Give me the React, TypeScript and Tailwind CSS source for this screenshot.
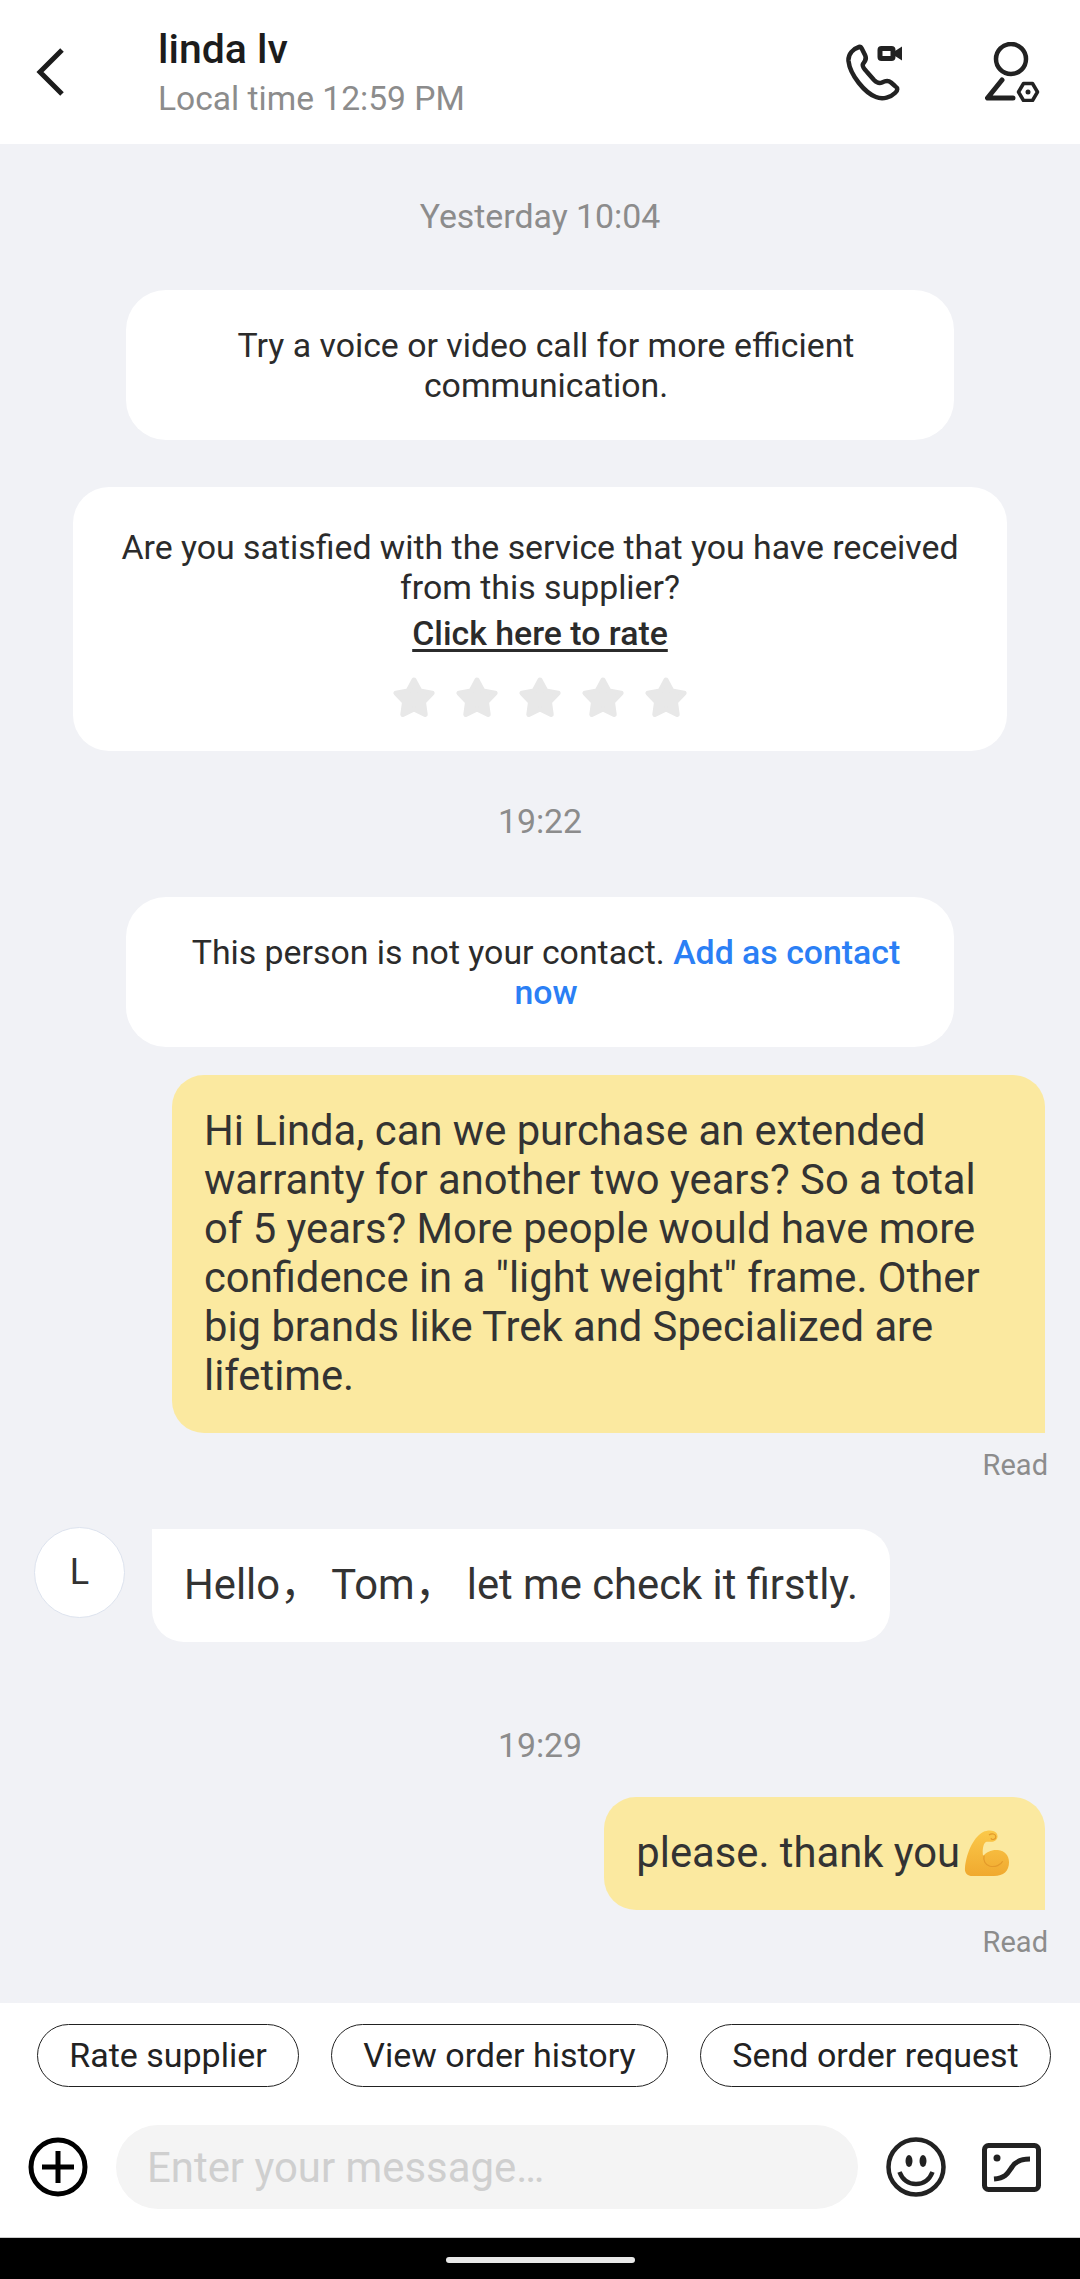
import React from "react";

const Star = () => (
  <svg viewBox="0 0 44 44" className="w-[44px] h-[44px]">
    <polygon
      points="22,4 27.900,14.900 40.100,17.100 31.500,26.100 33.200,38.400 22,33 10.800,38.400 12.500,26.100 3.900,17.100 16.100,14.900"
      fill="#e8e8e8"
      stroke="#e8e8e8"
      strokeWidth="5"
      strokeLinejoin="round"
    />
  </svg>
);

const Biceps = () => (
  <svg viewBox="0 0 46 48" className="ml-[4px] w-[46px] h-[47px] shrink-0">
    <defs>
      <linearGradient id="arm" x1="0" y1="0" x2="0" y2="1">
        <stop offset="0" stopColor="#fbc94a" />
        <stop offset="1" stopColor="#f0a92f" />
      </linearGradient>
    </defs>
    <path
      d="M19 2c5-2.500 12-2 14 1.500 2 3.500 0 8-4.500 8.500-3 .3-5.500-.5-7 .5-2.500 2-3.500 9-2.500 14 3.500-4 8.500-6.500 15-6 7.500.6 11.500 6 11.500 12.500C45.500 42 40 47 30 47H8c-5 0-8-3-7.500-8C1.500 26 8 8 19 2z"
      fill="url(#arm)"
    />
    <path
      d="M20 26c-1 5 1 10 6 11 5.500 1 11-1 13-5M25 5c3-2 7-1 7 2s-4 3.500-5 1.500"
      fill="none"
      stroke="#e39a2a"
      strokeWidth="1.200"
    />
  </svg>
);

const SystemCard = ({ children }: { children: React.ReactNode }) => (
  <div className="mx-[126px] h-[150px] bg-white rounded-[40px] flex items-center justify-center text-center text-[33.85px] leading-[40px] text-[#2b2b2b] pl-[58px] pr-[46px] pt-[2px]">
    <div>{children}</div>
  </div>
);

const TimeLabel = ({ children, className }: { children: React.ReactNode; className: string }) => (
  <div className={`text-center text-[33.85px] leading-[40px] text-[#8c8c8c] ${className}`}>{children}</div>
);

const ReadLabel = ({ className }: { className: string }) => (
  <div className={`pr-[32px] text-right text-[29px] leading-[36px] text-[#8c8c8c] ${className}`}>Read</div>
);

const Chip = ({ label, width }: { label: string; width: string }) => (
  <div className={`${width} h-[63px] rounded-full border border-[#222] flex items-center justify-center text-[34px] text-[#222] whitespace-nowrap`}>
    {label}
  </div>
);

export default function App() {
  return (
    <div className="w-[1080px] h-[2279px] flex flex-col bg-[#f1f2f6] overflow-hidden font-['Roboto','Noto_Sans_CJK_SC',sans-serif]">
      {/* header */}
      <div className="h-[144px] bg-white flex items-center shrink-0">
        <svg viewBox="0 0 30 50" className="ml-[36px] w-[30px] h-[50px] shrink-0">
          <path d="M26 3 4 25l22 22" fill="none" stroke="#1c1c1c" strokeWidth="5" />
        </svg>
        <div className="ml-[92px] flex-1">
          <div className="text-[41px] leading-[48px] font-medium text-[#1c1c1c]">linda lv</div>
          <div className="mt-[6px] text-[33.6px] leading-[40px] text-[#8c8c8c]">Local time 12:59 PM</div>
        </div>
        <svg viewBox="0 0 58 58" className="w-[58px] h-[58px] shrink-0">
          <path
            d="M14 4C8 6 3 11 3.500 18 5 32 20 50 31 54c7 3 15 0 19-4 3-3 3-5 0-7l-4-3.500c-3-2.500-6-1.500-9 0-3 1.500-5 .5-8-2.500l-7-8c-4-4-5-6-4-8 2-3 4-5 2-9l-3-6c-1-2-1.500-2.500-3-2z"
            fill="none"
            stroke="#222"
            strokeWidth="4.500"
            strokeLinejoin="round"
          />
          <rect x="35" y="5.500" width="13" height="10" rx="1.500" fill="none" stroke="#222" strokeWidth="5" />
          <path d="M50 8l7-4.500v14L50 13z" fill="#222" />
        </svg>
        <svg viewBox="0 0 56 60" className="ml-[82px] mr-[39px] w-[56px] h-[60px] shrink-0">
          <circle cx="26" cy="17" r="15" fill="none" stroke="#222" strokeWidth="4.500" />
          <path d="M17 38 2.500 56H28" fill="none" stroke="#222" strokeWidth="5" strokeLinecap="round" strokeLinejoin="round" />
          <path d="M33.500 50l5-8.500h9l5 8.500-5 8.500h-9z" fill="none" stroke="#222" strokeWidth="3.500" strokeLinejoin="round" />
          <circle cx="43" cy="50" r="2.500" fill="#222" />
        </svg>
      </div>

      {/* messages */}
      <div className="flex-1 min-h-0 flex flex-col">
        <TimeLabel className="mt-[53px]">Yesterday 10:04</TimeLabel>
        <div className="mt-[53px]">
          <SystemCard>Try a voice or video call for more efficient communication.</SystemCard>
        </div>

        <div className="mt-[47px] mx-[73px] h-[264px] bg-white rounded-[36px] flex flex-col items-center text-center text-[33.85px] text-[#2b2b2b] px-[40px] pt-[41px]">
          <div className="leading-[40px]">Are you satisfied with the service that you have received from this supplier?</div>
          <div className="mt-[6px] leading-[40px] font-medium underline underline-offset-[4px]">Click here to rate</div>
          <div className="mt-[22px] flex gap-[19px]">
            <Star />
            <Star />
            <Star />
            <Star />
            <Star />
          </div>
        </div>

        <TimeLabel className="mt-[51px]">19:22</TimeLabel>
        <div className="mt-[55px]">
          <SystemCard>
            This person is not your contact. <span className="font-medium text-[#2b7ff5]">Add as contact</span>
            <br />
            <span className="font-medium text-[#2b7ff5]">now</span>
          </SystemCard>
        </div>

        <div className="mt-[28px] ml-[172px] mr-[35px] h-[358px] bg-[#fbe9a0] rounded-[32px] rounded-br-none px-[32px] pt-[31px] text-[41.75px] leading-[49px] text-[#333]">
          Hi Linda, can we purchase an extended warranty for another two years? So a total of 5 years? More people would have more confidence in a "light weight" frame. Other big brands like Trek and Specialized are lifetime.
        </div>
        <ReadLabel className="mt-[14px]" />

        <div className="mt-[44px] flex items-start pl-[34px]">
          <div className="w-[91px] h-[91px] rounded-full bg-white border border-[#dde3ee] flex items-center justify-center text-[36px] text-[#333] pb-[2px]">
            L
          </div>
          <div className="ml-[27px] mt-[2px] h-[113px] bg-white rounded-[32px] rounded-tl-none px-[32px] flex items-center text-[41.75px] text-[#333] whitespace-pre">
            Hello， Tom， let me check it firstly.
          </div>
        </div>

        <TimeLabel className="mt-[84px]">19:29</TimeLabel>
        <div className="mt-[31px] self-end mr-[35px] h-[113px] bg-[#fbe9a0] rounded-[32px] rounded-br-none pl-[32px] pr-[35px] flex items-center text-[41.75px] text-[#333]">
          <span>please. thank you</span>
          <Biceps />
        </div>
        <ReadLabel className="mt-[14px]" />
      </div>

      {/* bottom bar */}
      <div className="h-[234px] bg-white shrink-0">
        <div className="mt-[21px] pl-[37px] flex gap-[32px]">
          <Chip label="Rate supplier" width="w-[262px]" />
          <Chip label="View order history" width="w-[337px]" />
          <Chip label="Send order request" width="w-[351px]" />
        </div>
        <div className="mt-[38px] flex items-center">
          <svg viewBox="0 0 60 60" className="ml-[28px] w-[60px] h-[60px] shrink-0">
            <circle cx="30" cy="30" r="27" fill="none" stroke="#000" strokeWidth="5" />
            <path d="M30 14v32M14 30h32" stroke="#000" strokeWidth="5" />
          </svg>
          <div className="ml-[28px] w-[742px] h-[84px] rounded-full bg-[#f4f4f4] flex items-center pl-[31px] pt-[2px] text-[41.9px] text-[#cfcfcf]">
            Enter your message…
          </div>
          <svg viewBox="0 0 60 60" className="ml-[28px] w-[60px] h-[60px] shrink-0">
            <circle cx="30" cy="30" r="27.500" fill="none" stroke="#222" strokeWidth="4.500" />
            <ellipse cx="23" cy="24" rx="3.500" ry="6" fill="#222" />
            <ellipse cx="37" cy="24" rx="3.500" ry="6" fill="#222" />
            <path d="M13.500 35c3.500 9 10.500 12 16.500 12s13-3 16.500-12" fill="none" stroke="#222" strokeWidth="4.500" />
          </svg>
          <svg viewBox="0 0 59 49" className="ml-[36px] w-[59px] h-[49px] shrink-0">
            <rect x="2.500" y="2.500" width="54" height="44" rx="4" fill="none" stroke="#222" strokeWidth="5" />
            <circle cx="15" cy="15" r="3.500" fill="#222" />
            <path d="M12 36c12-1 14-6 18-12 3-5 8-8 18-8" fill="none" stroke="#222" strokeWidth="5" />
          </svg>
        </div>
      </div>

      {/* android nav */}
      <div className="h-[42px] bg-black border-t border-[#cccccc] shrink-0 flex justify-center pt-[19px]">
        <div className="w-[189px] h-[6px] rounded-full bg-[#e8e8e8]" />
      </div>
    </div>
  );
}
